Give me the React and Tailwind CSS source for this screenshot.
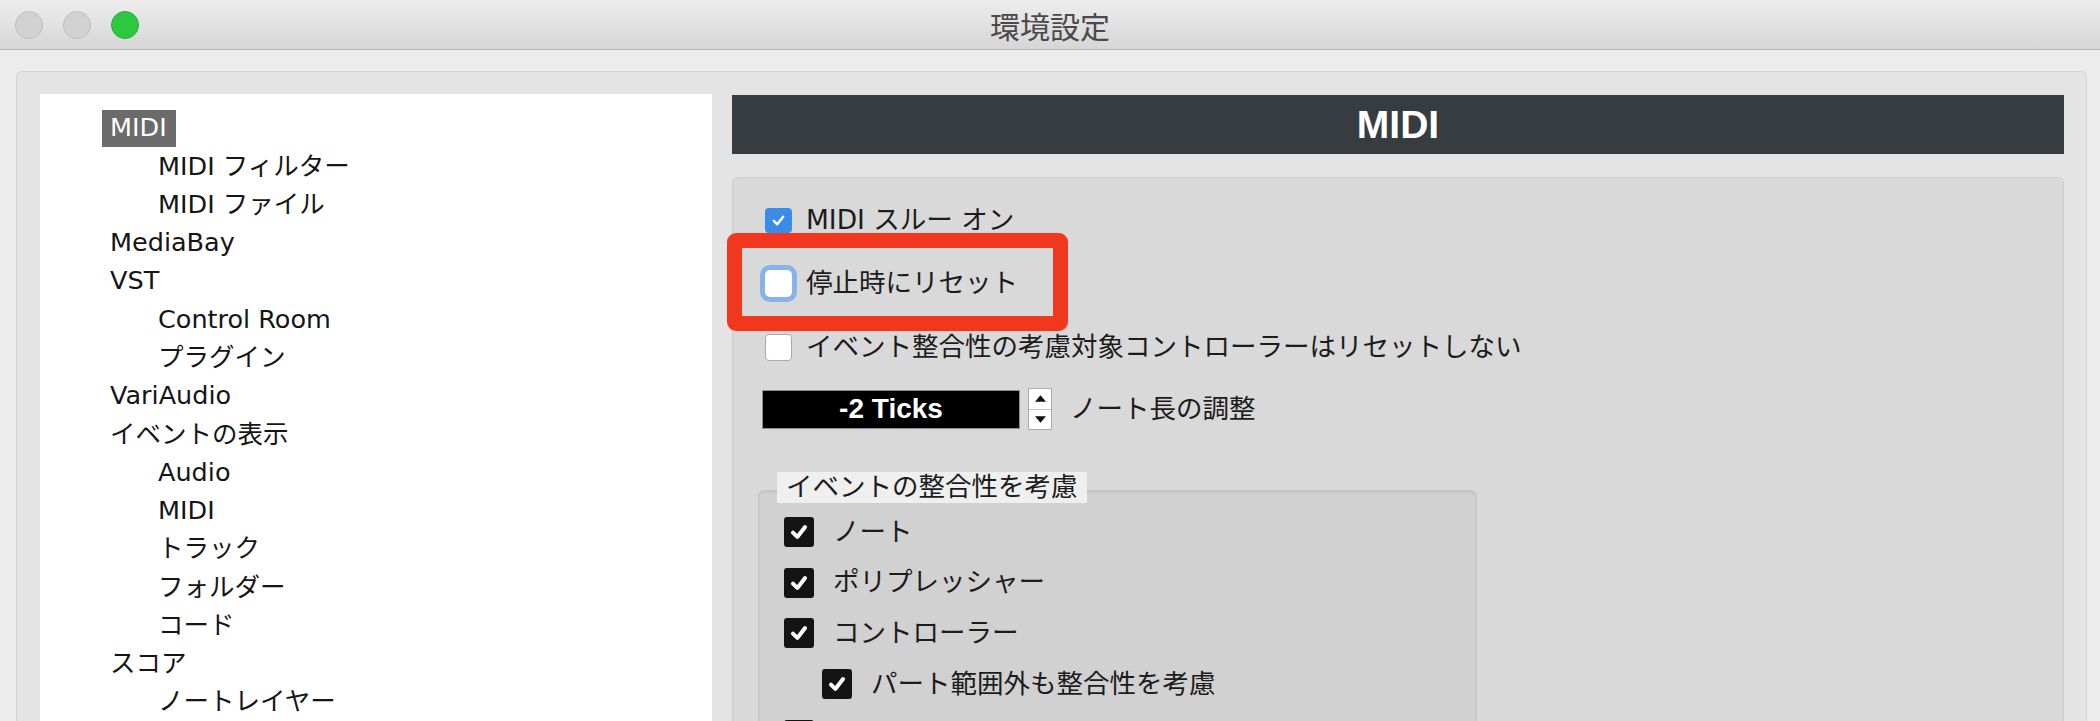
import React from 'react';

const sidebarItems = [
  { label: 'MIDI', level: 0, selected: true },
  { label: 'MIDI フィルター', level: 1 },
  { label: 'MIDI ファイル', level: 1 },
  { label: 'MediaBay', level: 0 },
  { label: 'VST', level: 0 },
  { label: 'Control Room', level: 1 },
  { label: 'プラグイン', level: 1 },
  { label: 'VariAudio', level: 0 },
  { label: 'イベントの表示', level: 0 },
  { label: 'Audio', level: 1 },
  { label: 'MIDI', level: 1 },
  { label: 'トラック', level: 1 },
  { label: 'フォルダー', level: 1 },
  { label: 'コード', level: 1 },
  { label: 'スコア', level: 0 },
  { label: 'ノートレイヤー', level: 1 },
];

// last row only shows the top edge of its checkbox in the window
const chaseItems = [
  { label: 'ノート' },
  { label: 'ポリプレッシャー' },
  { label: 'コントローラー' },
  { label: 'パート範囲外も整合性を考慮', indent: true },
  { label: '' },
];

const FONT = { fontFamily: '"DejaVu Sans", "Noto Sans CJK JP", sans-serif' };

const Check = ({ width = 3 }) => (
  <svg viewBox="0 0 20 20" className="w-full h-full">
    <path d="M4.5 10.5 L8.5 14.5 L15.5 5.5" fill="none" stroke="#fff" strokeWidth={width} strokeLinecap="round" strokeLinejoin="round" />
  </svg>
);

const BlueCheckbox = () => (
  <div className="w-[27px] h-[25px] rounded-[4px] bg-[#3a8ce8] p-[4px] shrink-0">
    <Check width={2.8} />
  </div>
);

const DarkCheckbox = () => (
  <div className="w-[30px] h-[30px] rounded-[3px] bg-[#141414] p-[4px] shrink-0">
    <Check width={3.6} />
  </div>
);

const Stepper = () => (
  <div className="w-[24px] h-[42px] bg-white border border-[#a8a8a8] flex flex-col">
    <div className="flex-1 flex items-center justify-center border-b border-[#c8c8c8]">
      <svg viewBox="0 0 10 6" className="w-[11px] h-[7px]"><path d="M0 6 L5 0 L10 6 Z" fill="#111" /></svg>
    </div>
    <div className="flex-1 flex items-center justify-center">
      <svg viewBox="0 0 10 6" className="w-[11px] h-[7px]"><path d="M0 0 L10 0 L5 6 Z" fill="#111" /></svg>
    </div>
  </div>
);

export default function App() {
  return (
    <div className="w-[2100px] h-[721px] overflow-hidden bg-[#ececec] flex flex-col" style={FONT}>
      {/* Title bar */}
      <div className="h-[50px] shrink-0 grid grid-cols-[1fr_auto_1fr] items-center bg-gradient-to-b from-[#ededed] to-[#d6d6d6] border-b border-[#b3b3b3]">
        <div className="flex items-center gap-[20px] pl-[15px]">
          <div className="w-[28px] h-[28px] rounded-full bg-[#d2d2d2] border border-[#bdbdbd]" />
          <div className="w-[28px] h-[28px] rounded-full bg-[#d2d2d2] border border-[#bdbdbd]" />
          <div className="w-[28px] h-[28px] rounded-full bg-[#2cc940] border border-[#24ad36]" />
        </div>
        <div className="text-[30px] leading-none text-[#4a4a4a]" style={{ fontFamily: '"Noto Sans CJK JP", sans-serif' }}>
          環境設定
        </div>
        <div />
      </div>

      {/* Body */}
      <div className="flex-1 min-h-0 pt-[21px] pl-[16px] pr-[13px]">
        <div className="h-full border border-b-0 border-[#d3d3d3] rounded-t-[6px] bg-[#e4e4e4] pt-[22px] pl-[23px] pr-[22px] flex gap-[20px]">
          {/* Sidebar */}
          <div className="w-[672px] shrink-0 bg-white pt-[15px] text-[25.5px] text-[#151515]">
            {sidebarItems.map((item, i) => (
              <div
                key={i}
                className={`h-[38.27px] flex items-center leading-none whitespace-nowrap ${item.level === 0 ? 'pl-[70px]' : 'pl-[118px]'}`}
              >
                {item.selected ? (
                  <span className="-ml-[8px] h-[37px] flex items-center pl-[8px] pr-[9px] bg-[#6b6b6b] text-white">{item.label}</span>
                ) : (
                  <span>{item.label}</span>
                )}
              </div>
            ))}
          </div>

          {/* Right column */}
          <div className="w-[1332px] shrink-0 pt-[1px] flex flex-col">
            <div className="h-[59px] shrink-0 bg-[#363c3f] flex items-center justify-center">
              <span className="text-white font-bold text-[39px] leading-none" style={{ fontFamily: '"Liberation Sans", Arial, sans-serif' }}>MIDI</span>
            </div>

            <div className="mt-[23px] flex-1 bg-[#d9d9d9] border border-b-0 border-[#cecece] rounded-t-[6px] pt-[22px] pl-[25px] text-[26.5px] text-[#1c1c1c]">
              {/* MIDI Thru */}
              <div className="h-[40px] pl-[7px] flex items-center gap-[14px] leading-none">
                <BlueCheckbox />
                <span>MIDI スルー オン</span>
              </div>

              {/* Reset on stop, highlighted */}
              <div className="relative mt-[23px] h-[40px] pl-[7px] flex items-center gap-[14px] leading-none">
                <div className="w-[27px] h-[27px] rounded-[5px] bg-white shrink-0 ring-[5px] ring-[#86b3e8]" />
                <span>停止時にリセット</span>
                <div className="absolute left-[-31px] top-[-30px] w-[341px] h-[98px] border-[15px] border-[#f2371f] rounded-[9px]" />
              </div>

              {/* Do not reset chased controllers */}
              <div className="mt-[24px] h-[40px] pl-[7px] flex items-center gap-[14px] leading-none">
                <div className="w-[27px] h-[27px] rounded-[4px] bg-white border border-[#a9a9a9] shrink-0" />
                <span>イベント整合性の考慮対象コントローラーはリセットしない</span>
              </div>

              {/* Length adjustment */}
              <div className="mt-[21px] h-[42px] pl-[4px] flex items-center leading-none">
                <div className="w-[258px] h-[39px] bg-black border border-[#8e8e8e] flex items-center justify-center">
                  <span className="text-white font-bold text-[28px]" style={{ fontFamily: '"Liberation Sans", Arial, sans-serif' }}>-2 Ticks</span>
                </div>
                <div className="ml-[8px]">
                  <Stepper />
                </div>
                <span className="ml-[18px]">ノート長の調整</span>
              </div>

              {/* Chase events group */}
              <div className="mt-[42px]">
                <div className="relative z-10 ml-[19px] w-fit h-[31px] px-[9px] bg-[#efefef] flex items-center leading-none">
                  イベントの整合性を考慮
                </div>
                <div className="-mt-[13px] w-[719px] h-[260px] bg-[#d1d1d1] border border-[#c2c2c2] rounded-[7px] shadow-[inset_0_1px_2px_rgba(0,0,0,0.08)] pt-[26px] pl-[25px] flex flex-col gap-[20.67px]">
                  {chaseItems.map((item, i) => (
                    <div key={i} className={`h-[30px] flex items-center gap-[19px] leading-none ${item.indent ? 'ml-[38px] gap-[18px]' : ''}`}>
                      <DarkCheckbox />
                      {item.label && <span>{item.label}</span>}
                    </div>
                  ))}
                </div>
              </div>
            </div>
          </div>
        </div>
      </div>
    </div>
  );
}
